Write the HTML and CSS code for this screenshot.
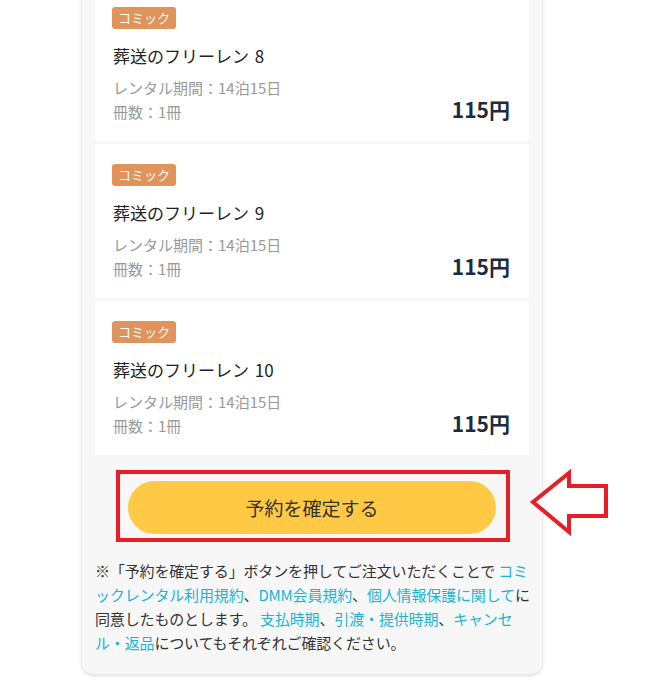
FILE: index.html
```html
<!DOCTYPE html>
<html lang="ja">
<head>
<meta charset="utf-8">
<link rel="stylesheet" href="styles.css">
</head>
<body>
<div class="panel">
  <div class="card">
    <span class="badge">コミック</span>
    <div class="title">葬送のフリーレン 8</div>
    <div class="row">
      <div class="meta"><div>レンタル期間：14泊15日</div><div>冊数：1冊</div></div>
      <div class="price">115円</div>
    </div>
  </div>
  <div class="card">
    <span class="badge">コミック</span>
    <div class="title">葬送のフリーレン 9</div>
    <div class="row">
      <div class="meta"><div>レンタル期間：14泊15日</div><div>冊数：1冊</div></div>
      <div class="price">115円</div>
    </div>
  </div>
  <div class="card">
    <span class="badge">コミック</span>
    <div class="title">葬送のフリーレン 10</div>
    <div class="row">
      <div class="meta"><div>レンタル期間：14泊15日</div><div>冊数：1冊</div></div>
      <div class="price">115円</div>
    </div>
  </div>
  <div class="highlight">
    <button class="confirm">予約を確定する</button>
  </div>
  <p class="note">※「予約を確定する」ボタンを押してご注文いただくことで <a>コミ<br>ックレンタル利用規約</a>、<a>DMM会員規約</a>、<a>個人情報保護に関して</a>に<br>同意したものとします。 <a>支払時期</a>、<a>引渡・提供時期</a>、<a>キャンセ<br>ル・返品</a>についてもそれぞれご確認ください。</p>
</div>
<svg class="arrow" width="84" height="76" viewBox="528 468 84 76">
  <polygon points="533,502 569,473 569,486 606,486 606,516 569,516 569,532" fill="#fff" stroke="#e61e25" stroke-width="4" stroke-linejoin="miter"/>
</svg>
</body>
</html>
```
FILE: styles.css
```css
html, body {
  margin: 0;
  padding: 0;
  background: #fff;
}
body {
  font-family: "Noto Sans CJK JP", "Noto Sans", sans-serif;
  color: #333;
  position: relative;
  height: 681px;
  overflow: hidden;
}
.panel {
  width: 460px;
  box-sizing: border-box;
  margin: -13px 0 0 82px;
  background: #f7f7f7;
  padding: 0 13px 19px;
  border-radius: 0 0 10px 10px;
  box-shadow: 0 1px 4px rgba(0,0,0,0.18);
  display: flex;
  flex-direction: column;
  gap: 3px;
}
.card {
  background: #fff;
  padding: 20px 19px 17px 17px;
  display: flex;
  flex-direction: column;
  align-items: flex-start;
  height: 154px;
  box-sizing: border-box;
}
.badge {
  display: inline-block;
  background: #e0935a;
  color: #fff;
  font-size: 13px;
  height: 22px;
  line-height: 22px;
  padding: 0 6px;
  border-radius: 3px;
}
.title {
  margin-top: 14px;
  margin-left: 1px;
  font-size: 17px;
  line-height: 26px;
  color: #222;
  word-spacing: 2px;
}
.row {
  align-self: stretch;
  display: flex;
  justify-content: space-between;
  align-items: flex-end;
  margin-top: 7px;
  margin-left: 1px;
}
.meta {
  font-size: 15px;
  line-height: 24px;
  color: #999;
}
.price {
  font-size: 21px;
  font-weight: bold;
  color: #1d2b3e;
  line-height: 30px;
}
.highlight {
  align-self: center;
  width: 394px;
  box-sizing: border-box;
  border: 4px solid #e61e25;
  margin-top: 12px;
  padding: 7px 10px 4px 8px;
  position: relative;
  left: 1px;
}
.confirm {
  display: block;
  width: 100%;
  height: 53px;
  border: none;
  border-radius: 27px;
  background: #ffc945;
  font-family: inherit;
  font-size: 19px;
  color: #333;
  padding: 0;
}
.note {
  margin: 14px 0 0;
  font-size: 15px;
  line-height: 24px;
  letter-spacing: -0.15px;
  white-space: nowrap;
  color: #333;
}
.note a {
  color: #1ab4d4;
}
.arrow {
  position: absolute;
  left: 528px;
  top: 468px;
}
```
